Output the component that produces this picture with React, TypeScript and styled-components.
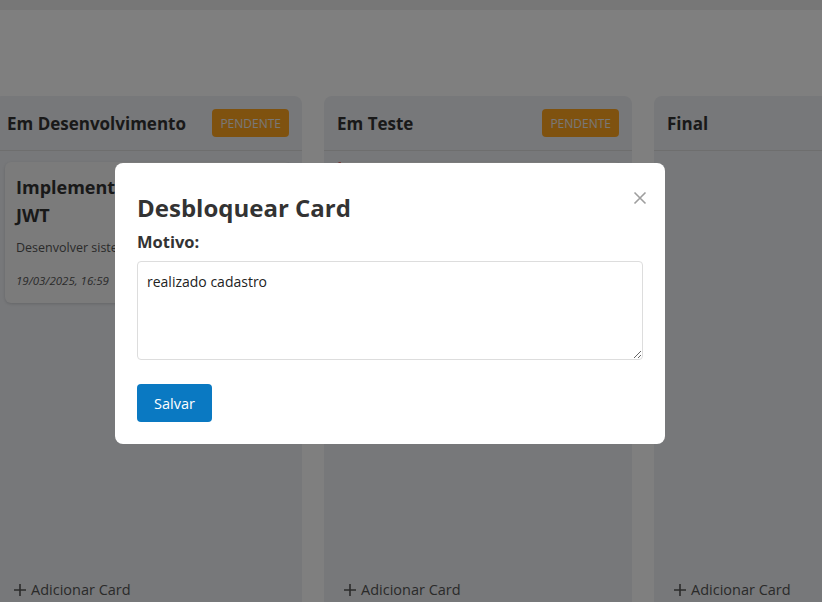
import React from "react";
import styled, { createGlobalStyle } from "styled-components";

const GlobalStyle = createGlobalStyle`
  body {
    margin: 0;
    font-family: "Open Sans", "Noto Sans", sans-serif;
    color: #333;
    background: #ffffff;
  }
`;

const Page = styled.div`
  height: 602px;
  overflow: hidden;
  background: #ffffff;
`;

const TopBar = styled.div`
  height: 10px;
  background: #eeeeee;
`;

const Board = styled.div`
  display: flex;
  gap: 22px;
  margin-left: -6px;
  padding-top: 86px;
`;

const Column = styled.section`
  flex: 0 0 308px;
  height: 520px;
  display: flex;
  flex-direction: column;
  background: #eef0f4;
  border-radius: 8px;
`;

const ColumnHeader = styled.header`
  height: 54px;
  display: flex;
  align-items: center;
  justify-content: space-between;
  padding: 0 13px;
  border-bottom: 1px solid #dcdcdc;
`;

const ColumnTitle = styled.h3`
  margin: 0;
  font-size: 17px;
  font-weight: 700;
  color: #333;
`;

const Badge = styled.span`
  display: inline-flex;
  align-items: center;
  height: 28px;
  padding: 0 8px;
  border-radius: 4px;
  background: #ffa41f;
  color: #f0f0f0;
  font-size: 12px;
  text-transform: uppercase;
`;

const CardList = styled.div`
  flex: 1;
  padding: 11px;
  display: flex;
  flex-direction: column;
  gap: 10px;
`;

interface CardBoxProps {
  $blocked?: boolean;
}

const Card = styled.article<CardBoxProps>`
  background: #f6f6f7;
  border-radius: 6px;
  padding: 11px 11px 15px;
  box-shadow: 0 1px 3px rgba(0, 0, 0, 0.15);
  border-left: ${(p) => (p.$blocked ? "5px solid #e53935" : "none")};
`;

const CardTitle = styled.h4`
  margin: 0;
  font-size: 18px;
  line-height: 28px;
  font-weight: 700;
  color: #333;
`;

const CardText = styled.p`
  margin: 10px 0 0;
  font-size: 12.5px;
  color: #555;
`;

const CardDate = styled.p`
  margin: 17px 0 0;
  font-size: 11.5px;
  font-style: italic;
  color: #555;
`;

const AddButton = styled.button`
  align-self: flex-start;
  display: flex;
  align-items: center;
  gap: 5px;
  margin: 0 0 14px 20px;
  padding: 0;
  border: none;
  background: none;
  font-family: inherit;
  font-size: 14.5px;
  line-height: 24px;
  color: #555;
`;

const Overlay = styled.div`
  position: fixed;
  inset: 0;
  background: rgba(0, 0, 0, 0.5);
  padding: 163px 0 0 115px;
`;

const Modal = styled.div`
  position: relative;
  width: 550px;
  box-sizing: border-box;
  padding: 22px;
  background: #ffffff;
  border-radius: 8px;
`;

const CloseButton = styled.button`
  position: absolute;
  top: 28px;
  right: 18px;
  width: 14px;
  height: 14px;
  padding: 0;
  border: none;
  background: none;
  display: flex;
`;

const ModalTitle = styled.h2`
  margin: 5px 0 0;
  font-size: 24px;
  line-height: 36px;
  font-weight: 700;
  color: #333;
`;

const Label = styled.label`
  display: block;
  margin-top: 4px;
  font-size: 16.5px;
  line-height: 24px;
  font-weight: 700;
  color: #333;
`;

const TextArea = styled.textarea`
  display: block;
  width: 100%;
  height: 99px;
  margin-top: 7px;
  box-sizing: border-box;
  padding: 10px 9px;
  border: 1px solid #dddddd;
  border-radius: 4px;
  font-family: inherit;
  font-size: 14px;
  color: #222;
  outline: none;
`;

const SaveButton = styled.button`
  margin-top: 24px;
  height: 38px;
  padding: 0 17px;
  border: none;
  border-radius: 4px;
  background: #0a79c2;
  color: #ffffff;
  font-family: inherit;
  font-size: 14.5px;
`;

const PlusIcon = () => (
  <svg width="12" height="12" viewBox="0 0 12 12">
    <path d="M6 0v12M0 6h12" stroke="#555" strokeWidth="1.6" />
  </svg>
);

const columns = [
  { title: "Em Desenvolvimento", badge: true },
  { title: "Em Teste", badge: true },
  { title: "Final", badge: false },
];

export default function App() {
  return (
    <Page>
      <GlobalStyle />
      <TopBar />
      <Board>
        {columns.map((col, i) => (
          <Column key={col.title}>
            <ColumnHeader>
              <ColumnTitle>{col.title}</ColumnTitle>
              {col.badge && <Badge>Pendente</Badge>}
            </ColumnHeader>
            <CardList>
              {i === 0 && (
                <Card>
                  <CardTitle>Implementar autenticação JWT</CardTitle>
                  <CardText>Desenvolver sistema de login com token JWT</CardText>
                  <CardDate>19/03/2025, 16:59</CardDate>
                </Card>
              )}
              {i === 1 && (
                <Card $blocked>
                  <CardTitle>Cadastro de usuários</CardTitle>
                  <CardText>Tela de cadastro</CardText>
                  <CardDate>19/03/2025, 17:10</CardDate>
                </Card>
              )}
            </CardList>
            <AddButton>
              <PlusIcon />
              Adicionar Card
            </AddButton>
          </Column>
        ))}
      </Board>
      <Overlay>
        <Modal>
          <CloseButton aria-label="Fechar">
            <svg width="14" height="14" viewBox="0 0 14 14">
              <path d="M1.5 1.5l11 11M12.5 1.5l-11 11" stroke="#9e9e9e" strokeWidth="1.6" />
            </svg>
          </CloseButton>
          <ModalTitle>Desbloquear Card</ModalTitle>
          <Label htmlFor="motivo">Motivo:</Label>
          <TextArea id="motivo" readOnly defaultValue="realizado cadastro" />
          <SaveButton>Salvar</SaveButton>
        </Modal>
      </Overlay>
    </Page>
  );
}
